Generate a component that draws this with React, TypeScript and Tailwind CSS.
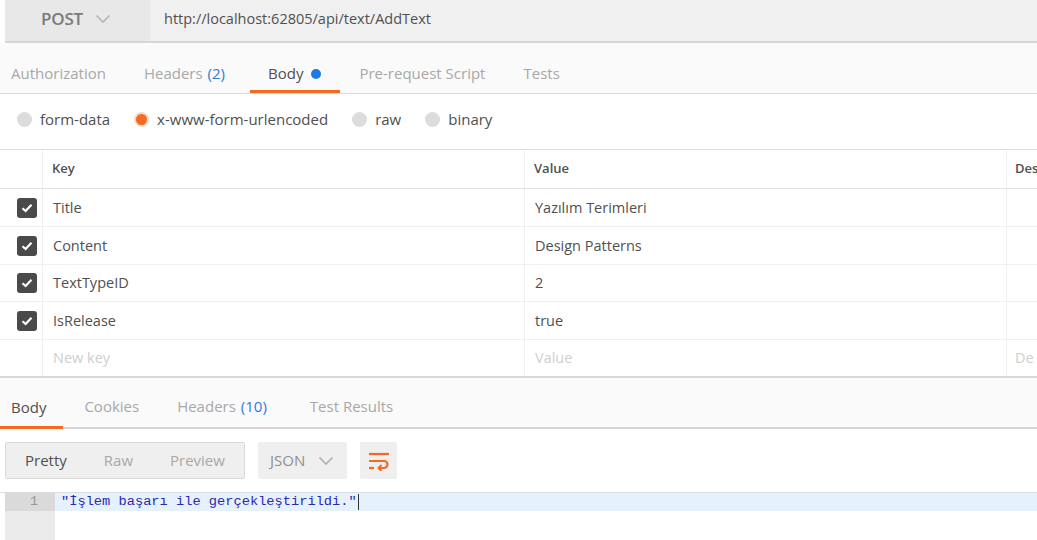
import React from "react";

const font = { fontFamily: '"Open Sans", "Liberation Sans", sans-serif' };

function Chevron({ className }: { className?: string }) {
  return (
    <svg width="16" height="10" viewBox="0 0 16 10" className={className}>
      <path d="M1.5 1.5 L8 8 L14.5 1.5" fill="none" stroke="currentColor" strokeWidth="1.6" />
    </svg>
  );
}

function Check() {
  return (
    <div className="w-[20px] h-[20px] rounded-[3px] bg-[#4a4a4a] flex items-center justify-center">
      <svg width="12" height="10" viewBox="0 0 12 10">
        <path d="M1.5 5.2 L4.6 8 L10.5 1.8" fill="none" stroke="#fff" strokeWidth="2.2" />
      </svg>
    </div>
  );
}

function Radio({ active, label }: { active?: boolean; label: string }) {
  return (
    <div className="flex items-center gap-[8px]">
      {active ? (
        <div className="w-[15px] h-[15px] rounded-full bg-[#f5d9c8] flex items-center justify-center">
          <div className="w-[11px] h-[11px] rounded-full bg-[#f26b21]" />
        </div>
      ) : (
        <div className="w-[15px] h-[15px] rounded-full bg-[#dcdcdc]" />
      )}
      <span className="text-[15px] text-[#505050]">{label}</span>
    </div>
  );
}

const rows = [
  { k: "Title", v: "Yazılım Terimleri", h: "h-[38px]" },
  { k: "Content", v: "Design Patterns", h: "h-[38px]" },
  { k: "TextTypeID", v: "2", h: "h-[37px]" },
  { k: "IsRelease", v: "true", h: "h-[38px]" },
];

export default function App() {
  return (
    <div className="w-[1037px] h-[540px] overflow-hidden bg-white" style={font}>
      {/* URL bar */}
      <div className="pl-[5px] bg-white">
        <div className="flex h-[43px] border-b-2 border-[#d6d6d6]">
          <div className="w-[145px] bg-[#e8e8e8] flex items-center pl-[36px] gap-[12px] pb-[4px]">
            <span className="text-[17px] font-semibold text-[#7a7a7a] tracking-[-0.2px]">POST</span>
            <Chevron className="text-[#b5b5b5]" />
          </div>
          <div className="flex-1 bg-[#f0f0f0] flex items-center pl-[14px] pb-[4px]">
            <span className="text-[14.5px] text-[#505050]">http://localhost:62805/api/text/AddText</span>
          </div>
        </div>
      </div>

      {/* request tabs */}
      <div className="h-[51px] bg-[#fafafa] border-b border-[#dcdcdc] flex items-stretch text-[15px]">
        <div className="pl-[11px] pr-[19px] flex items-center pt-[11px] text-[#a8a8a8]">Authorization</div>
        <div className="pl-[19px] pr-[25px] flex items-center pt-[11px] text-[#a8a8a8]">
          Headers <span className="ml-[5px] text-[#2f7bd8]">(2)</span>
        </div>
        <div className="pl-[18px] pr-[19px] flex items-center text-[#505050] border-b-[3px] border-[#f26b21] pt-[14px]">
          Body <span className="ml-[8px] w-[10px] h-[10px] rounded-full bg-[#1a7ae8] inline-block" />
        </div>
        <div className="px-[19px] flex items-center pt-[11px] text-[#a8a8a8]">Pre-request Script</div>
        <div className="px-[19px] flex items-center pt-[11px] text-[#a8a8a8]">Tests</div>
      </div>

      {/* body type radios */}
      <div className="h-[55px] flex items-center pl-[17px] gap-[24px] pb-[5px]">
        <Radio label="form-data" />
        <Radio active label="x-www-form-urlencoded" />
        <Radio label="raw" />
        <Radio label="binary" />
      </div>

      {/* table */}
      <div className="border-t border-[#dedede] border-b-2 border-b-[#d8d8d8]">
        <div className="flex h-[39px] border-b border-[#e2e2e2] text-[13px] font-semibold text-[#505050]">
          <div className="w-[43px] border-r border-[#f0f0f0]" />
          <div className="w-[482px] border-r border-[#f0f0f0] flex items-center pl-[9px]">Key</div>
          <div className="w-[482px] border-r border-[#f0f0f0] flex items-center pl-[9px]">Value</div>
          <div className="flex-1 min-w-0 flex items-center pl-[8px] whitespace-nowrap overflow-hidden">Des</div>
        </div>
        {rows.map((r) => (
          <div key={r.k} className={`flex ${r.h} border-b border-[#f0f0f0] text-[14.5px] text-[#505050]`}>
            <div className="w-[43px] border-r border-[#f0f0f0] flex items-center pl-[17px]">
              <Check />
            </div>
            <div className="w-[482px] border-r border-[#f0f0f0] flex items-center pl-[10px]">{r.k}</div>
            <div className="w-[482px] border-r border-[#f0f0f0] flex items-center pl-[10px]">{r.v}</div>
            <div className="flex-1" />
          </div>
        ))}
        <div className="flex h-[36px] text-[14.5px] text-[#cfcfcf]">
          <div className="w-[43px] border-r border-[#f0f0f0]" />
          <div className="w-[482px] border-r border-[#f0f0f0] flex items-center pl-[10px]">New key</div>
          <div className="w-[482px] border-r border-[#f0f0f0] flex items-center pl-[10px]">Value</div>
          <div className="flex-1 min-w-0 flex items-center pl-[8px] whitespace-nowrap overflow-hidden">De</div>
        </div>
      </div>

      {/* response tabs */}
      <div className="h-[51px] bg-[#fafafa] border-b-2 border-[#d6d6d6] flex items-stretch text-[15px]">
        <div className="pl-[11px] pr-[17px] flex items-center text-[#505050] border-b-[3px] border-[#f26b21] pt-[11px] mb-[-2px]">Body</div>
        <div className="pl-[21px] pr-[19px] flex items-center pt-[8px] text-[#a8a8a8]">Cookies</div>
        <div className="pl-[19px] pr-[21px] flex items-center pt-[8px] text-[#a8a8a8]">
          Headers <span className="ml-[5px] text-[#2f7bd8]">(10)</span>
        </div>
        <div className="px-[22px] flex items-center pt-[8px] text-[#a8a8a8]">Test Results</div>
      </div>

      {/* controls */}
      <div className="flex items-center pl-[5px] pt-[13px] gap-[13px]">
        <div className="w-[240px] h-[37px] bg-[#efefef] border border-[#d9d9d9] rounded-[2px] flex items-center text-[15px]">
          <span className="pl-[19px] text-[#505050]">Pretty</span>
          <span className="pl-[37px] text-[#a8a8a8]">Raw</span>
          <span className="pl-[37px] text-[#a8a8a8]">Preview</span>
        </div>
        <div className="w-[89px] h-[37px] bg-[#efefef] rounded-[2px] flex items-center pl-[12px] gap-[13px]">
          <span className="text-[15px] text-[#909090]">JSON</span>
          <Chevron className="text-[#b0b0b0]" />
        </div>
        <div className="w-[37px] h-[37px] bg-[#efefef] rounded-[2px] flex items-center justify-center">
          <svg width="22" height="20" viewBox="0 0 22 20">
            <path d="M1 3 H21" stroke="#f26b21" strokeWidth="2.2" fill="none" />
            <path d="M1 10 H16 a3.5 3.5 0 0 1 0 7 H11" stroke="#f26b21" strokeWidth="2.2" fill="none" />
            <path d="M13.5 14 L10.5 17 L13.5 20" stroke="#f26b21" strokeWidth="2" fill="none" />
            <path d="M1 17 H6" stroke="#f26b21" strokeWidth="2.2" fill="none" />
          </svg>
        </div>
      </div>

      {/* code */}
      <div className="mt-[13px] pl-[5px] border-t border-[#dcdcdc] flex h-[60px]">
        <div className="w-[50px] bg-[#ebebeb] flex flex-col">
          <div className="h-[18px] bg-[#dadada] text-right pr-[17px] text-[13.5px] leading-[18px] text-[#999]" style={{ fontFamily: '"Liberation Mono", monospace' }}>1</div>
        </div>
        <div className="flex-1">
          <div className="h-[18px] bg-[#e6f1fe] pl-[6px] text-[13.7px] leading-[18px] text-[#2a2ab0] flex items-center" style={{ fontFamily: '"Liberation Mono", monospace' }}>
            "İşlem başarı ile gerçekleştirildi."
            <span className="inline-block w-[1px] h-[16px] bg-[#333] ml-[1px]" />
          </div>
        </div>
      </div>
    </div>
  );
}
